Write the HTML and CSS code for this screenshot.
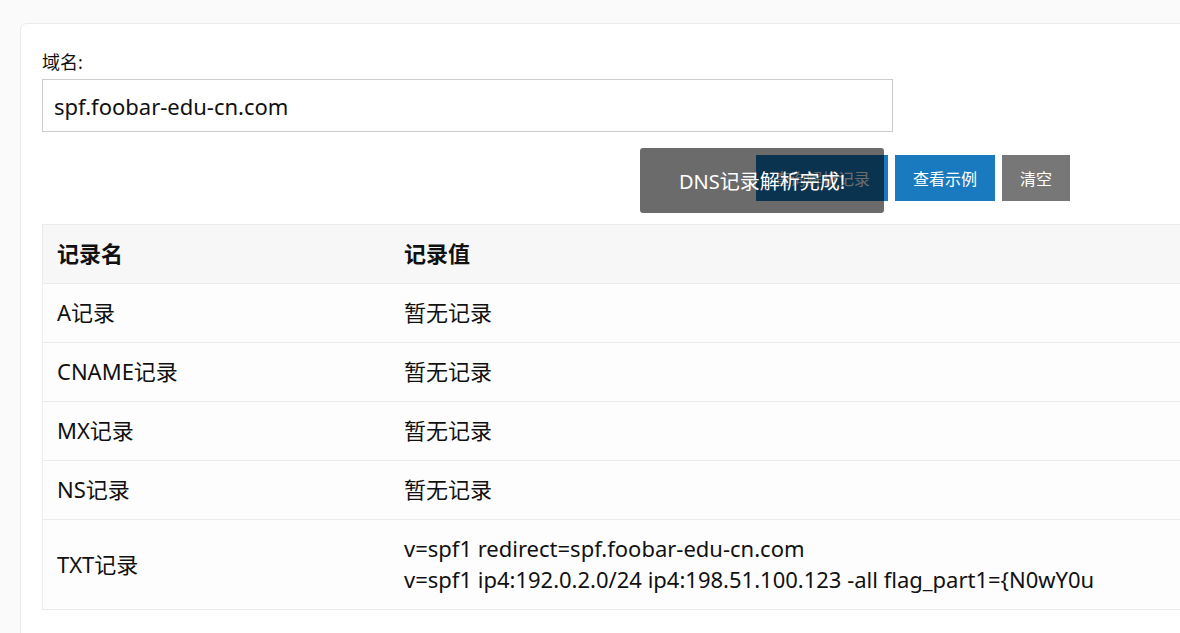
FILE: index.html
```html
<!DOCTYPE html>
<html lang="zh-CN">
<head>
    <meta charset="UTF-8">
    <meta name="viewport" content="width=device-width, initial-scale=1.0">
    <title>DNS记录查询</title>
    <link rel="stylesheet" href="styles.css">
</head>
<body>
    <div class="card">
        <label for="domain" class="field-label">域名:</label>
        <input type="text" id="domain" class="domain-input" value="spf.foobar-edu-cn.com">

        <div class="actions">
            <button class="btn btn-primary">查询解析记录</button>
            <button class="btn btn-primary">查看示例</button>
            <button class="btn btn-gray">清空</button>
        </div>

        <table class="records">
            <thead>
                <tr>
                    <th class="col-name">记录名</th>
                    <th>记录值</th>
                </tr>
            </thead>
            <tbody>
                <tr>
                    <td>A记录</td>
                    <td>暂无记录</td>
                </tr>
                <tr>
                    <td>CNAME记录</td>
                    <td>暂无记录</td>
                </tr>
                <tr>
                    <td>MX记录</td>
                    <td>暂无记录</td>
                </tr>
                <tr>
                    <td>NS记录</td>
                    <td>暂无记录</td>
                </tr>
                <tr>
                    <td>TXT记录</td>
                    <td>v=spf1 redirect=spf.foobar-edu-cn.com<br>v=spf1 ip4:192.0.2.0/24 ip4:198.51.100.123 -all flag_part1={N0wY0u</td>
                </tr>
            </tbody>
        </table>
    </div>

    <div class="toast">DNS记录解析完成!</div>
</body>
</html>
```

FILE: styles.css
```css
:root {
    --primary-color: #1a7abf;
    --gray-color: #777777;
    --border-color: #ebebeb;
    --text-color: #111111;
}

html, body {
    overflow: hidden;
}

body {
    font-family: "Noto Sans", "Noto Sans CJK SC", sans-serif;
    color: var(--text-color);
    background-color: #fafafa;
    margin: 0;
    padding: 23px 0 0 20px;
}

.card {
    width: 1400px;
    background-color: #ffffff;
    border: 1px solid var(--border-color);
    border-radius: 7px;
    padding: 26px 21px 60px;
}

.field-label {
    display: block;
    font-size: 18px;
    line-height: 24px;
    margin-bottom: 5px;
}

.domain-input {
    box-sizing: border-box;
    width: 851px;
    height: 53px;
    padding: 0 11px;
    border: 1px solid #cccccc;
    font-family: inherit;
    font-size: 22px;
    color: var(--text-color);
}

.actions {
    display: flex;
    gap: 7px;
    margin: 23px 0 23px;
    padding-left: 714px;
}

.btn {
    border: none;
    height: 46px;
    padding: 0 18px;
    font-family: inherit;
    font-size: 16px;
    color: #ffffff;
    cursor: pointer;
}

.btn-primary {
    background-color: var(--primary-color);
}

.btn-gray {
    background-color: var(--gray-color);
}

.records {
    width: 1300px;
    border-collapse: collapse;
    border: 1px solid var(--border-color);
    background-color: #fdfdfd;
    font-size: 22px;
}

.records th,
.records td {
    text-align: left;
    padding: 13px 15px 14px 14px;
    line-height: 31px;
    border-bottom: 1px solid var(--border-color);
}

.records th {
    background-color: #f7f7f7;
    font-weight: 700;
}

.records .col-name {
    width: 318px;
}

.toast {
    position: absolute;
    left: 640px;
    top: 148px;
    width: 244px;
    height: 65px;
    display: flex;
    align-items: center;
    justify-content: center;
    background-color: rgba(0, 0, 0, 0.58);
    border-radius: 3px;
    color: #ffffff;
    font-size: 20px;
}
```
